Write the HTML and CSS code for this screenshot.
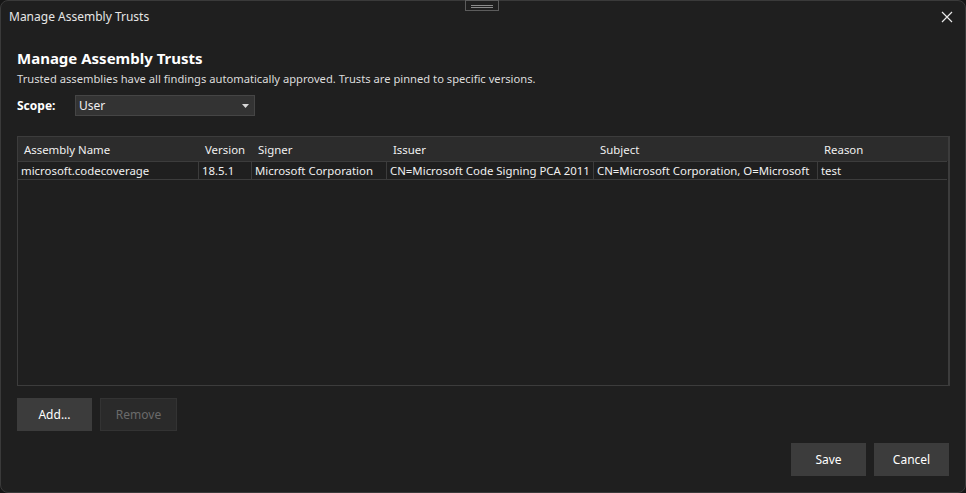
FILE: index.html
```html
<!DOCTYPE html>
<html lang="en">
<head>
  <meta charset="UTF-8">
  <title>Manage Assembly Trusts</title>
  <link rel="stylesheet" href="styles.css">
</head>
<body>

<div class="window">
  <div class="titlebar">
    <span class="title">Manage Assembly Trusts</span>
    <div class="grip"></div>
    <svg class="close" width="12" height="12" viewBox="0 0 12 12">
      <path d="M1 1 L11 11 M11 1 L1 11" stroke="#e8e8e8" stroke-width="1.2"/>
    </svg>
  </div>

  <div class="content">
    <h1>Manage Assembly Trusts</h1>
    <p class="desc">Trusted assemblies have all findings automatically approved. Trusts are pinned to specific versions.</p>

    <div class="scope">
      <label>Scope:</label>
      <div class="combo">
        <span>User</span>
        <svg width="7" height="4" viewBox="0 0 7 4"><path d="M0 0 H7 L3.5 4 Z" fill="#d8d8d8"/></svg>
      </div>
    </div>

    <div class="grid">
      <div class="row head">
        <div class="c1">Assembly Name</div>
        <div class="c2">Version</div>
        <div class="c3">Signer</div>
        <div class="c4">Issuer</div>
        <div class="c5">Subject</div>
        <div class="c6">Reason</div>
      </div>
      <div class="row item">
        <div class="c1">microsoft.codecoverage</div>
        <div class="c2">18.5.1</div>
        <div class="c3">Microsoft Corporation</div>
        <div class="c4">CN=Microsoft Code Signing PCA 2011</div>
        <div class="c5">CN=Microsoft Corporation, O=Microsoft</div>
        <div class="c6">test</div>
      </div>
    </div>

    <div class="actions">
      <button>Add...</button>
      <button class="disabled">Remove</button>
    </div>

    <div class="footer">
      <button>Save</button>
      <button>Cancel</button>
    </div>
  </div>
</div>

</body>
</html>
```

FILE: styles.css
```css
body {
  margin: 0;
  background: #161616;
  font-family: 'Noto Sans', 'Open Sans', sans-serif;
  font-size: 12px;
  color: #f0f0f0;
}
.window {
  width: 964px;
  height: 491px;
  background: #1f1f1f;
  border: 1px solid #3a3a3a;
  border-radius: 8px;
  display: flex;
  flex-direction: column;
}
.titlebar {
  height: 31px;
  display: flex;
  align-items: center;
  padding: 0 8px;
  position: relative;
}
.title {
  flex: 1;
  font-size: 12px;
  color: #e6e6e6;
}
.grip {
  position: absolute;
  left: 464px;
  top: -1px;
  width: 34px;
  height: 11px;
  border: 1px solid #5c5c5c;
  box-sizing: border-box;
}
.grip::before, .grip::after {
  content: '';
  position: absolute;
  left: 5px;
  right: 5px;
  height: 1px;
  background: #8a8a8a;
}
.grip::before { top: 4px; }
.grip::after { top: 6px; }
.close {
  margin-right: 4px;
}
.content {
  flex: 1;
  padding: 0 15px 14px 16px;
  display: flex;
  flex-direction: column;
}
h1 {
  font-size: 15px;
  font-weight: bold;
  margin: 16px 0 0;
  line-height: 20px;
  color: #ffffff;
}
.desc {
  margin: 3px 0 0;
  line-height: 16px;
  color: #dcdcdc;
  font-size: 11.2px;
}
.scope {
  display: flex;
  align-items: center;
  margin-top: 8px;
}
.scope label {
  font-weight: bold;
  width: 58px;
  color: #ffffff;
}
.combo {
  width: 180px;
  height: 21px;
  box-sizing: border-box;
  background: #333333;
  border: 1px solid #454545;
  display: flex;
  align-items: center;
  justify-content: space-between;
  padding: 0 5px 0 3px;
}
.grid {
  margin-top: 20px;
  height: 250px;
  box-sizing: border-box;
  border: 1px solid #3c3c3c;
  border-right-width: 2px;
  font-size: 11.4px;
}
.row {
  display: grid;
  grid-template-columns: 181px 53px 135px 207px 224px 1fr;
}
.row.head {
  background: #2c2c2c;
  height: 24px;
  align-items: center;
}
.row.head div {
  padding-left: 6px;
}
.row.item {
  height: 17px;
  border-top: 1px solid #3c3c3c;
  border-bottom: 1px solid #3c3c3c;
  margin-right: 1px;
}
.row.item div {
  padding-left: 3px;
  border-right: 1px solid #3c3c3c;
  line-height: 17px;
  white-space: nowrap;
  overflow: hidden;
}
.row.item div:last-child {
  border-right: none;
}
.actions {
  display: flex;
  gap: 8px;
  margin-top: 12px;
}
button {
  font-family: inherit;
  font-size: 12px;
  width: 75px;
  height: 33px;
  background: #3c3c3c;
  color: #ffffff;
  border: none;
}
button.disabled {
  width: 77px;
  background: #2a2a2a;
  border: 1px solid #333333;
  color: #6a6a6a;
}
.footer {
  display: flex;
  justify-content: flex-end;
  gap: 8px;
  margin-top: 12px;
  margin-right: 1px;
}
```
